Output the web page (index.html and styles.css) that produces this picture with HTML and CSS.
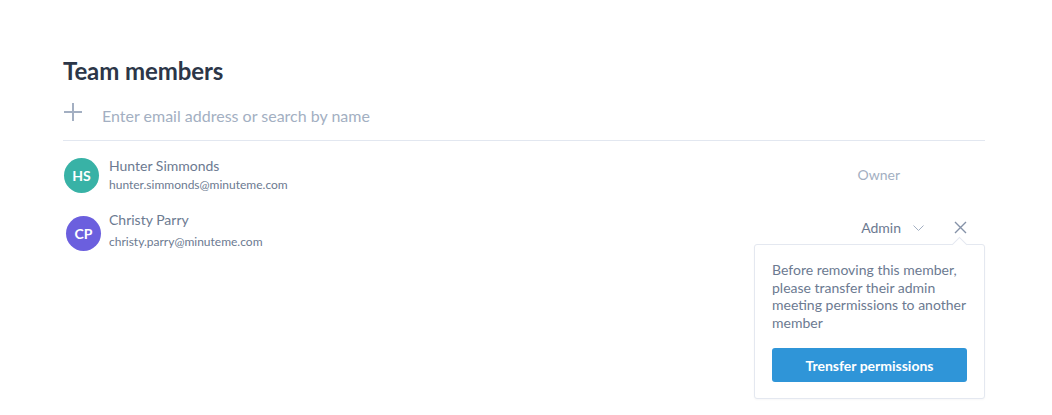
FILE: index.html
```html
<!DOCTYPE html>
<html>
<head>
<meta charset="utf-8">
<link rel="stylesheet" href="styles.css">
</head>
<body>
<div class="panel">
  <h1 class="title">Team members</h1>
  <div class="search">
    <svg class="plus" width="20" height="20" viewBox="0 0 20 20"><path d="M10 1v18M1 10h18" stroke="#a3afc2" stroke-width="2" fill="none"/></svg>
    <span class="placeholder">Enter email address or search by name</span>
  </div>
  <div class="members">
    <div class="member">
      <div class="avatar teal">HS</div>
      <div class="info">
        <div class="name">Hunter Simmonds</div>
        <div class="email">hunter.simmonds@minuteme.com</div>
      </div>
      <div class="role owner">Owner</div>
    </div>
    <div class="member second">
      <div class="avatar purple">CP</div>
      <div class="info">
        <div class="name">Christy Parry</div>
        <div class="email">christy.parry@minuteme.com</div>
      </div>
      <div class="actions">
        <span class="role admin">Admin</span>
        <svg class="chev" width="11" height="6" viewBox="0 0 11 6"><path d="M0.5 0.5l5 5 5-5" stroke="#a3afc2" stroke-width="1" fill="none"/></svg>
        <svg class="close" width="13" height="13" viewBox="0 0 13 13"><path d="M1 1l11 11M12 1L1 12" stroke="#8592a8" stroke-width="1.4" fill="none"/></svg>
        <div class="popover">
          <p class="pop-text">Before removing this member, please transfer their admin meeting permissions to another member</p>
          <button class="btn">Trensfer permissions</button>
        </div>
      </div>
    </div>
  </div>
</div>
</body>
</html>
```

FILE: styles.css
```css
* { box-sizing: border-box; }
html, body { min-height: 415px; }
body {
  margin: 0;
  background: #ffffff;
  font-family: Lato, "Open Sans", sans-serif;
}
.panel {
  width: 922px;
  margin-left: 63px;
  padding-top: 54px;
  min-height: 415px;
}
.title {
  margin: 0;
  font-size: 24px;
  font-weight: 700;
  color: #2c3648;
  line-height: 34px;
  letter-spacing: -0.1px;
}
.search {
  display: flex;
  align-items: center;
  height: 53px;
  border-bottom: 1px solid #e2e7f0;
}
.plus { display: block; margin-right: 19px; margin-top: -4px; }
.placeholder {
  font-size: 16px;
  color: #a3afc2;
  margin-top: 3px;
}
.members { padding-top: 15px; }
.member {
  display: flex;
  align-items: center;
  height: 38px;
}
.member.second { margin-top: 18px; }
.avatar {
  width: 35px;
  height: 35px;
  border-radius: 50%;
  color: #fff;
  font-size: 14px;
  font-weight: 700;
  display: flex;
  align-items: center;
  justify-content: center;
  flex-shrink: 0;
  margin-left: 1px;
}
.teal { background: #38b2a6; }
.purple { background: #6b5fde; margin-left: 3px; margin-top: 4px; }
.info { margin-left: 10px; flex: 1; }
.second .info { margin-left: 8px; }
.name {
  font-size: 14px;
  color: #6c7a91;
  line-height: 18px;
}
.email {
  font-size: 12px;
  color: #6c7a91;
  line-height: 18px;
  margin-top: 1px;
}
.second .email { margin-top: 4px; }
.role {
  font-size: 14px;
}
.owner { color: #a3afc2; margin-right: 85px; margin-top: -2px; }
.actions {
  position: relative;
  display: flex;
  align-items: center;
  margin-right: 18px;
  margin-top: -7px;
}
.admin { color: #6c7a91; }
.chev { margin-left: 12px; display: block; }
.close { margin-left: 30px; display: block; }
.popover {
  position: absolute;
  top: 25px;
  right: -18px;
  width: 231px;
  height: 155px;
  background: #fff;
  border: 1px solid #e4e8f0;
  border-radius: 3px;
  padding: 16px 17px 0 17px;
  box-shadow: 0 1px 2px rgba(40, 50, 70, 0.04);
  z-index: 2;
}
.popover::before {
  content: "";
  position: absolute;
  top: -6px;
  right: 19px;
  width: 10px;
  height: 10px;
  background: #fff;
  border-left: 1px solid #e4e8f0;
  border-top: 1px solid #e4e8f0;
  transform: rotate(45deg);
}
.pop-text {
  margin: 0;
  font-size: 14px;
  line-height: 17.5px;
  color: #6c7a91;
}
.btn {
  display: block;
  margin-top: 17px;
  width: 195px;
  height: 34px;
  border: none;
  border-radius: 3px;
  background: #2f95d8;
  color: #fff;
  font-family: Lato, sans-serif;
  font-size: 14px;
  font-weight: 700;
  margin-left: 0;
}
```
